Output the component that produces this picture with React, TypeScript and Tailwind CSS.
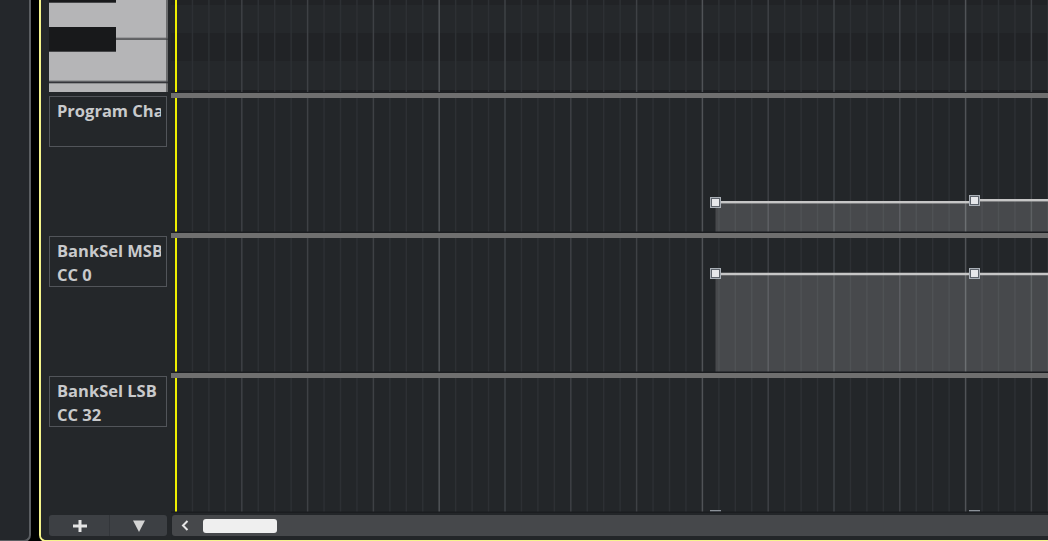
import type { ReactNode } from "react";

// grid geometry of the controller lanes (local x inside the right column)
const SUB = 16.45;
const X0 = 5;
const COUNT = 54;
const LANE_W = 877;

function GridLines({ h }: { h: number }) {
  const lines = [];
  for (let n = 1; n < COUNT; n++) {
    const x = X0 + n * SUB;
    const color = n % 16 === 0 ? "#505357" : n % 4 === 0 ? "#3e4145" : "#2d3034";
    lines.push(<rect key={n} x={x - 0.75} y={0} width={1.5} height={h} fill={color} />);
  }
  return (
    <>
      {lines}
      <rect x={4} y={0} width={2} height={h} fill="#eeee00" />
    </>
  );
}

function AutoNode({ x, y }: { x: number; y: number }) {
  return (
    <g>
      <rect x={x - 5.5} y={y - 5.5} width={11} height={11} fill="#aab0b7" />
      <rect x={x - 4.5} y={y - 4.5} width={9} height={9} fill="#5d636b" />
      <rect x={x - 3.5} y={y - 3.5} width={7} height={7} fill="#e6e7ea" />
    </g>
  );
}

function Lane({ children }: { children?: ReactNode }) {
  return (
    <svg width={LANE_W} height={135} className="block">
      <rect width={LANE_W} height={135} fill="#232629" />
      <GridLines h={134} />
      {children}
      <rect y={133.5} width={LANE_W} height={1.5} fill="#1b1d20" />
    </svg>
  );
}

function NoteGrid() {
  return (
    <svg width={LANE_W} height={93} className="block">
      <rect width={LANE_W} height={93} fill="#25282b" />
      <rect y={0} width={LANE_W} height={5} fill="#212326" />
      <rect y={33} width={LANE_W} height={28} fill="#212326" />
      <rect y={90} width={LANE_W} height={3} fill="#1d1f22" />
      <GridLines h={92} />
    </svg>
  );
}

function Piano() {
  return (
    <svg width={119} height={92} className="block">
      <rect width={117} height={92} fill="#b5b5b7" />
      <rect x={117} width={2} height={92} fill="#6a6b6d" />
      <rect x={0} y={0} width={67} height={2.7} fill="#18191b" />
      <rect x={0} y={27} width={67} height={24.7} fill="#18191b" />
      <rect x={67} y={37.7} width={52} height={1} fill="#5e5f61" />
      <rect x={67} y={38.7} width={52} height={1} fill="#3b3c3e" />
      <rect x={0} y={80.7} width={119} height={1} fill="#55565a" />
      <rect x={0} y={81.7} width={119} height={1.6} fill="#34353a" />
    </svg>
  );
}

function LaneLabel({ lines }: { lines: string[] }) {
  return (
    <div className="w-[118px] h-[51px] border border-[#52555a] pl-[7px] pt-[2px]">
      <div className="w-[104px] overflow-hidden whitespace-nowrap font-['Open_Sans',sans-serif] text-[16.5px] leading-[24px] font-bold text-[#c9cacc]">
        {lines.map((l) => (
          <div key={l}>{l}</div>
        ))}
      </div>
    </div>
  );
}

export default function App() {
  return (
    <div className="w-[1048px] h-[541px] overflow-hidden flex bg-black">
      {/* left inspector strip */}
      <div className="w-[31px] h-[542px] shrink-0 bg-[#24272b] border-r-2 border-b-2 border-[#5b5e62] rounded-br-[7px]" />
      <div className="w-[8px] shrink-0" />

      {/* focused editor panel */}
      <div className="flex-1 h-[542px] flex border-l-2 border-b-2 border-[#f5f48c] rounded-bl-[7px] bg-[#232629] overflow-hidden">
        {/* keyboard + lane names */}
        <div className="w-[130px] shrink-0 pl-[8px] flex flex-col bg-[#24272a]">
          <div className="h-[96px]">
            <Piano />
          </div>
          <div className="h-[140px]">
            <LaneLabel lines={["Program Change"]} />
          </div>
          <div className="h-[140px]">
            <LaneLabel lines={["BankSel MSB", "CC 0"]} />
          </div>
          <div className="h-[139px]">
            <LaneLabel lines={["BankSel LSB", "CC 32"]} />
          </div>
          <div className="w-[118px] h-[21px] flex rounded-[3px] bg-[#3d4044]">
            <div className="flex-1 flex items-center justify-center pl-[3px] border-r border-[#33363a]">
              <svg width="14" height="12" viewBox="0 0 14 12">
                <rect x="0" y="4.5" width="14" height="3" fill="#e4e4e4" />
                <rect x="5.5" y="0" width="3" height="12" fill="#e4e4e4" />
              </svg>
            </div>
            <div className="flex-1 flex items-center justify-center pl-[1px]">
              <svg width="12" height="12" viewBox="0 0 12 12">
                <path d="M0 0.5 H12 L6 12 Z" fill="#d4d4d4" />
              </svg>
            </div>
          </div>
        </div>

        {/* event display */}
        <div className="flex-1 flex flex-col">
          <NoteGrid />
          <div className="h-[5px] bg-[#6f6f6f]" />
          <Lane>
            <path d="M544.5 105.5 H803.5 V103.5 H877 V134 H544.5 Z" fill="#ffffff" fillOpacity={0.165} />
            <path d="M544.5 104.3 H803.5 V102.3 H877" fill="none" stroke="#c6c6c6" strokeWidth={2.4} />
            <AutoNode x={544.5} y={104.5} />
            <AutoNode x={803.5} y={102.5} />
          </Lane>
          <div className="h-[5px] bg-[#6f6f6f]" />
          <Lane>
            <path d="M544.5 37 H877 V134 H544.5 Z" fill="#ffffff" fillOpacity={0.165} />
            <path d="M544.5 36 H877" fill="none" stroke="#c6c6c6" strokeWidth={2.4} />
            <AutoNode x={544.5} y={35.5} />
            <AutoNode x={803.5} y={35.5} />
          </Lane>
          <div className="h-[5px] bg-[#6f6f6f]" />
          <Lane>
            <rect x={539} y={132} width={11} height={1} fill="#8b9198" />
            <rect x={539} y={133} width={11} height={1} fill="#5f656c" />
            <rect x={798} y={132} width={11} height={1} fill="#8b9198" />
            <rect x={798} y={133} width={11} height={1} fill="#5f656c" />
          </Lane>
          <div className="h-[2px]" />
          <div className="h-[21px] ml-[1px] flex items-center rounded-l-[3px] bg-[#46484b]">
            <svg width="8" height="11" viewBox="0 0 8 11" className="ml-[9px]">
              <polyline points="6.5,1 2,5.5 6.5,10" fill="none" stroke="#e6e6e6" strokeWidth="2" />
            </svg>
            <div className="ml-[14px] w-[74px] h-[14px] rounded-[3px] bg-[#efefef]" />
          </div>
        </div>
      </div>
    </div>
  );
}
